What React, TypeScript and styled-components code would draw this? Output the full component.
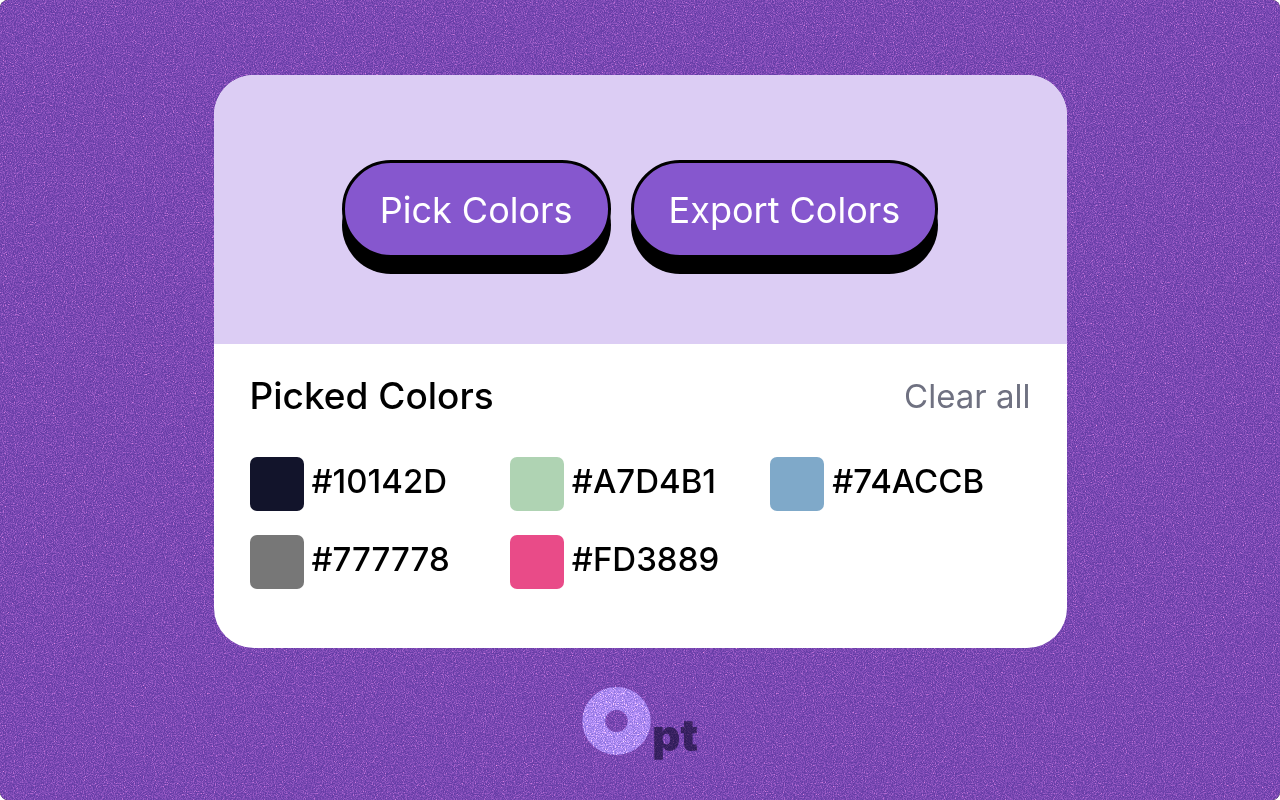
import React from "react";
import styled, { createGlobalStyle } from "styled-components";

const GlobalStyle = createGlobalStyle`
  *, *::before, *::after { box-sizing: border-box; }
  body { margin: 0; background: #ffffff; font-family: Inter, "Liberation Sans", sans-serif; }
`;

const Page = styled.main`
  position: relative;
  isolation: isolate;
  display: flex;
  flex-direction: column;
  align-items: center;
  min-height: 100vh;
  padding: 75px 24px 40px;
  overflow: hidden;
  border-radius: 8px;
  background: #643da6;
`;

const Grain = styled.svg`
  position: absolute;
  inset: 0;
  z-index: 1;
  width: 100%;
  height: 100%;
  pointer-events: none;
  mix-blend-mode: color-dodge;
`;

const Card = styled.section`
  position: relative;
  z-index: 2;
  width: 100%;
  max-width: 853px;
  overflow: hidden;
  border-radius: 40px;
  background: #ffffff;
`;

const Actions = styled.div`
  display: flex;
  flex-wrap: wrap;
  justify-content: center;
  gap: 20px;
  padding: 85px 24px 86px;
  background: #dccdf4;
`;

const ActionButton = styled.button`
  height: 98px;
  margin: 0;
  padding: 2px 35px 0;
  border: 3px solid #000000;
  border-radius: 49px;
  background: #8657ce;
  box-shadow: 0 16px 0 #000000;
  color: #ffffff;
  font: 400 36px/48px Inter, "Liberation Sans", sans-serif;
  cursor: pointer;
`;

const Picked = styled.div`
  padding: 28px 36px 59px;
`;

const PickedHeader = styled.header`
  display: flex;
  align-items: center;
  justify-content: space-between;
`;

const Title = styled.h2`
  margin: 0;
  color: #000000;
  font-size: 37px;
  font-weight: 500;
  line-height: 48px;
`;

const ClearButton = styled.button`
  margin: 0;
  padding: 0;
  border: 0;
  background: none;
  color: #6f7181;
  font: 400 33px/48px Inter, "Liberation Sans", sans-serif;
  cursor: pointer;
`;

const Swatches = styled.ul`
  display: grid;
  grid-template-columns: repeat(3, 1fr);
  row-gap: 24px;
  margin: 37px 0 0;
  padding: 0;
  list-style: none;
`;

const SwatchItem = styled.li`
  display: flex;
  gap: 8px;
  color: #000000;
  font-size: 33px;
  font-weight: 500;
  line-height: 48px;
`;

const Chip = styled.span<{ $color: string }>`
  flex: none;
  width: 54px;
  height: 54px;
  border-radius: 7px;
  background: ${(p) => p.$color};
`;

const Brand = styled.footer`
  display: flex;
  align-items: flex-start;
  gap: 1px;
  margin-top: 39px;
`;

const BrandMark = styled.svg`
  display: block;
  width: 69px;
  height: 68px;
`;

const BrandText = styled.span`
  margin-top: 24px;
  color: #2e1c5a;
  font-size: 44px;
  font-weight: 900;
  line-height: 48px;
`;

const colors = [
  { code: "#10142D", fill: "#12142b" },
  { code: "#A7D4B1", fill: "#afd3b3" },
  { code: "#74ACCB", fill: "#7fa9c9" },
  { code: "#777778", fill: "#777777" },
  { code: "#FD3889", fill: "#e94b88" },
];

export default function App() {
  return (
    <>
      <GlobalStyle />
      <Page>
        <Grain aria-hidden="true">
          <filter id="grain" x="0" y="0" width="100%" height="100%" colorInterpolationFilters="sRGB">
            <feTurbulence type="fractalNoise" baseFrequency="0.9" numOctaves="3" seed="4" />
            <feColorMatrix values="1 0 0 0 -0.33  1 0 0 0 -0.35  0.5 0 0 0 -0.18  0 0 0 0 1" />
          </filter>
          <rect width="100%" height="100%" filter="url(#grain)" />
        </Grain>
        <Card>
          <Actions>
            <ActionButton type="button">Pick Colors</ActionButton>
            <ActionButton type="button">Export Colors</ActionButton>
          </Actions>
          <Picked>
            <PickedHeader>
              <Title>Picked Colors</Title>
              <ClearButton type="button">Clear all</ClearButton>
            </PickedHeader>
            <Swatches>
              {colors.map((c) => (
                <SwatchItem key={c.code}>
                  <Chip $color={c.fill} />
                  <span>{c.code}</span>
                </SwatchItem>
              ))}
            </Swatches>
          </Picked>
        </Card>
        <Brand>
          <BrandMark viewBox="0 0 69 68" role="img" aria-label="O">
            <ellipse cx="34.5" cy="34" rx="22.75" ry="22.5" fill="none" stroke="#8d74e0" strokeWidth="23" />
          </BrandMark>
          <BrandText>pt</BrandText>
        </Brand>
      </Page>
    </>
  );
}
